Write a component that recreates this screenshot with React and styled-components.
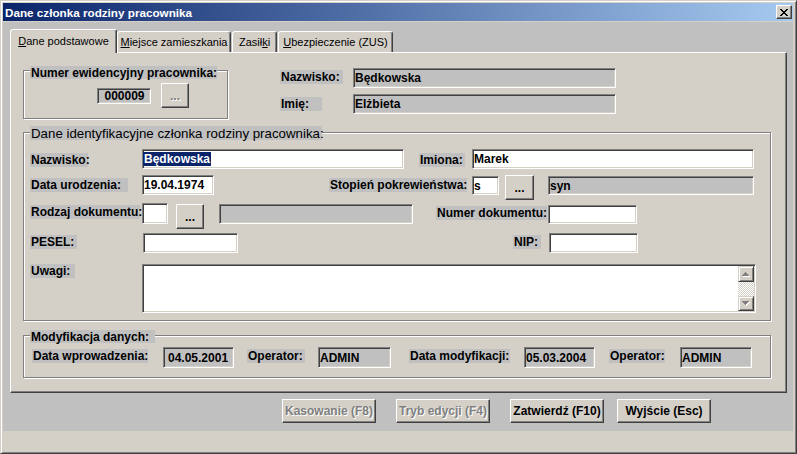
import React from "react";
import styled, { createGlobalStyle } from "styled-components";

const SANS = '"Liberation Sans", Arial, sans-serif';

const GlobalStyle = createGlobalStyle`
  html, body {
    margin: 0;
    padding: 0;
    background: #d4d0c8;
  }
  body {
    font-family: ${SANS};
  }
`;

const Window = styled.div`
  width: 797px;
  height: 454px;
  box-sizing: border-box;
  border: 1px solid;
  border-color: #d4d0c8 #404040 #404040 #d4d0c8;
  box-shadow: inset 1px 1px 0 #fff, inset -1px -1px 0 #808080;
  padding: 2px 3px 1px 2px;
  background: #d4d0c8;
  display: flex;
  flex-direction: column;
`;

const TitleBar = styled.div`
  flex: none;
  height: 18px;
  margin-bottom: 1px;
  padding: 0 1px 0 2px;
  background: linear-gradient(to right, #0a246a, #a6caf0);
  display: flex;
  align-items: center;
  justify-content: space-between;
  color: #fff;
  font: bold 11.7px ${SANS};
  white-space: nowrap;
`;

const CloseButton = styled.div`
  width: 16px;
  height: 14px;
  box-sizing: border-box;
  background: #d4d0c8;
  border: 1px solid;
  border-color: #fff #404040 #404040 #fff;
  box-shadow: inset -1px -1px 0 #808080;
  display: flex;
  align-items: center;
  justify-content: center;
`;

const TabArea = styled.div`
  flex: none;
  background: #c0c0c0;
  padding: 7px 6px 0 7px;
`;

const TabStrip = styled.div`
  display: flex;
  align-items: flex-end;
  height: 23px;
  position: relative;
  z-index: 1;
`;

const Tab = styled.div`
  flex: none;
  box-sizing: border-box;
  width: ${(p) => p.$w}px;
  height: ${(p) => (p.$active ? 24 : 21)}px;
  margin-bottom: ${(p) => (p.$active ? -1 : 0)}px;
  margin-left: ${(p) => p.$ml || 0}px;
  padding-bottom: ${(p) => (p.$active ? 2 : 0)}px;
  background: #d4d0c8;
  border: 1px solid;
  border-bottom: none;
  border-color: #fff #404040 transparent #fff;
  box-shadow: inset -1px 0 0 #808080;
  border-radius: 3px 3px 0 0;
  display: flex;
  align-items: center;
  justify-content: center;
  font: 11px ${SANS};
  color: #000;
  white-space: nowrap;
`;

const Page = styled.div`
  box-sizing: border-box;
  height: 341px;
  background: #d4d0c8;
  border: 1px solid;
  border-color: #fff #404040 #404040 #fff;
  box-shadow: inset -1px -1px 0 #808080;
  padding-left: 12px;
  display: flex;
  flex-direction: column;
`;

const TopSection = styled.div`
  display: flex;
  align-items: flex-start;
  margin-top: 15px;
`;

const InfoColumn = styled.div`
  display: flex;
  flex-direction: column;
  gap: 6px;
  margin-left: 52px;
`;

const Group = styled.div`
  flex: none;
  box-sizing: border-box;
  width: ${(p) => p.$w}px;
  height: ${(p) => p.$h}px;
  margin-top: ${(p) => p.$mt || 0}px;
  border: 1px solid #808080;
  box-shadow: inset 1px 1px 0 #fff, 1px 1px 0 #fff;
  display: flex;
  flex-direction: column;
`;

const Legend = styled.div`
  align-self: flex-start;
  box-sizing: border-box;
  width: ${(p) => p.$w}px;
  height: ${(p) => (p.$regular ? 14 : 13)}px;
  line-height: ${(p) => (p.$regular ? 14 : 13)}px;
  margin: ${(p) => p.$mt}px 0 0 6px;
  padding-left: 1px;
  background: #c0c0c0;
  font: ${(p) => (p.$regular ? "normal 13.3px" : "bold 12px")} ${SANS};
  white-space: nowrap;
`;

const Row = styled.div`
  display: flex;
  align-items: ${(p) => p.$align || "flex-start"};
  margin-top: ${(p) => p.$mt || 0}px;
  padding-left: ${(p) => p.$pl || 0}px;
`;

const LabelCell = styled.div`
  flex: none;
  display: flex;
  width: ${(p) => p.$w}px;
  margin-left: ${(p) => p.$ml || 0}px;
`;

const Label = styled.div`
  flex: none;
  box-sizing: border-box;
  width: ${(p) => p.$w}px;
  height: 14px;
  line-height: 14px;
  margin-top: ${(p) => p.$mt || 0}px;
  padding-left: 1px;
  background: #c0c0c0;
  font: bold 12px ${SANS};
  color: #000;
  white-space: nowrap;
`;

const Field = styled.div`
  flex: none;
  box-sizing: border-box;
  width: ${(p) => p.$w}px;
  height: ${(p) => p.$h || 20}px;
  margin-left: ${(p) => p.$ml || 0}px;
  margin-top: ${(p) => p.$mt || 0}px;
  padding-left: ${(p) => p.$pad || 1}px;
  background: ${(p) => (p.$ro ? "#c0c0c0" : "#fff")};
  border: 1px solid;
  border-color: #808080 #fff #fff #808080;
  box-shadow: inset 1px 1px 0 #404040, inset -1px -1px 0 #d4d0c8;
  display: flex;
  align-items: center;
  justify-content: ${(p) => (p.$center ? "center" : "flex-start")};
  font: bold 12px ${SANS};
  color: #000;
  white-space: nowrap;
  overflow: hidden;
`;

const Selected = styled.span`
  height: 14px;
  line-height: 14px;
  margin-left: -1px;
  padding: 0 1px;
  background: #0a246a;
  color: #fff;
`;

const DotButton = styled.div`
  flex: none;
  box-sizing: border-box;
  width: ${(p) => p.$w || 29}px;
  height: 25px;
  margin-left: ${(p) => p.$ml || 0}px;
  margin-top: ${(p) => p.$mt || 0}px;
  background: #d4d0c8;
  border: 1px solid;
  border-color: #fff #404040 #404040 #fff;
  box-shadow: inset -1px -1px 0 #808080;
  display: flex;
  align-items: center;
  justify-content: center;
  font: bold 12px ${SANS};
  color: ${(p) => (p.$disabled ? "#808080" : "#000")};
  text-shadow: ${(p) => (p.$disabled ? "1px 1px 0 #fff" : "none")};
`;

const Memo = styled(Field)`
  padding: 1px;
  align-items: stretch;
  justify-content: flex-end;
`;

const ScrollBar = styled.div`
  width: 16px;
  display: flex;
  flex-direction: column;
`;

const ScrollButton = styled.div`
  flex: none;
  box-sizing: border-box;
  height: ${(p) => p.$h}px;
  background: #d4d0c8;
  border: 1px solid;
  border-color: #d4d0c8 #404040 #404040 #d4d0c8;
  box-shadow: inset 1px 1px 0 #fff, inset -1px -1px 0 #808080;
  display: flex;
  align-items: center;
  justify-content: center;
`;

const ScrollTrack = styled.div`
  flex: 1;
  background: repeating-conic-gradient(#d4d0c8 0 25%, #fff 0 50%) 0 0 / 2px 2px;
`;

const ButtonBar = styled.div`
  flex: none;
  height: 38px;
  box-sizing: border-box;
  padding: 6px 0 0 279px;
  background: #c0c0c0;
  display: flex;
  align-items: flex-start;
`;

const ActionButton = styled.div`
  flex: none;
  box-sizing: border-box;
  width: 94px;
  height: 24px;
  margin-left: ${(p) => p.$ml || 0}px;
  background: #d4d0c8;
  border: 1px solid;
  border-color: #fff #404040 #404040 #fff;
  box-shadow: inset -1px -1px 0 #808080;
  display: flex;
  align-items: center;
  justify-content: center;
  font: bold 12px ${SANS};
  color: ${(p) => (p.$disabled ? "#808080" : "#000")};
  text-shadow: ${(p) => (p.$disabled ? "1px 1px 0 #fff" : "none")};
  white-space: nowrap;
`;

const BottomStrip = styled.div`
  flex: 1;
  background: #d4d0c8;
`;

const CloseGlyph = () => (
  <svg width="8" height="7" viewBox="0 0 8 7" shapeRendering="crispEdges">
    <path
      fill="#000"
      d="M0 0h2v1h-2z M6 0h2v1h-2z M1 1h2v1h-2z M5 1h2v1h-2z M2 2h4v1h-4z M3 3h2v1h-2z M2 4h4v1h-4z M1 5h2v1h-2z M5 5h2v1h-2z M0 6h2v1h-2z M6 6h2v1h-2z"
    />
  </svg>
);

const ArrowGlyph = ({ down }) => {
  const rows = down
    ? "M0 0h7v1h-7z M1 1h5v1h-5z M2 2h3v1h-3z M3 3h1v1h-1z"
    : "M3 0h1v1h-1z M2 1h3v1h-3z M1 2h5v1h-5z M0 3h7v1h-7z";
  return (
    <svg width="8" height="5" viewBox="0 0 8 5" shapeRendering="crispEdges">
      <path fill="#fff" d={rows} transform="translate(1 1)" />
      <path fill="#808080" d={rows} />
    </svg>
  );
};

export default function App() {
  return (
    <>
      <GlobalStyle />
      <Window>
        <TitleBar>
          <span>Dane członka rodziny pracownika</span>
          <CloseButton>
            <CloseGlyph />
          </CloseButton>
        </TitleBar>

        <TabArea>
          <TabStrip>
            <Tab $w={107} $active>
              <span><u>D</u>ane podstawowe</span>
            </Tab>
            <Tab $w={114}>
              <span><u>M</u>iejsce zamieszkania</span>
            </Tab>
            <Tab $w={45} $ml={1}>
              <span>Zasił<u>k</u>i</span>
            </Tab>
            <Tab $w={115} $ml={1}>
              <span><u>U</u>bezpieczenie (ZUS)</span>
            </Tab>
          </TabStrip>

          <Page>
            <TopSection>
              <Group $w={205} $h={49} $mt={2}>
                <Legend $w={187} $mt={-5}>Numer ewidencyjny pracownika:</Legend>
                <Row $mt={4} $pl={73} $align="center">
                  <Field $w={54} $h={16} $ro $center>000009</Field>
                  <DotButton $w={28} $ml={10} $disabled>...</DotButton>
                </Row>
              </Group>

              <InfoColumn>
                <Row>
                  <LabelCell $w={73}><Label $w={63} $mt={2}>Nazwisko:</Label></LabelCell>
                  <Field $w={263} $ro>Będkowska</Field>
                </Row>
                <Row>
                  <LabelCell $w={73}><Label $w={42} $mt={3}>Imię:</Label></LabelCell>
                  <Field $w={263} $ro>Elżbieta</Field>
                </Row>
              </InfoColumn>
            </TopSection>

            <Group $w={748} $h={189} $mt={13}>
              <Legend $w={292} $mt={-7} $regular>
                Dane identyfikacyjne członka rodziny pracownika:
              </Legend>

              <Row $mt={9} $pl={6}>
                <LabelCell $w={112}><Label $w={58} $mt={4}>Nazwisko:</Label></LabelCell>
                <Field $w={262}><Selected>Będkowska</Selected></Field>
                <LabelCell $w={53} $ml={15}><Label $w={46} $mt={4}>Imiona:</Label></LabelCell>
                <Field $w={282}>Marek</Field>
              </Row>

              <Row $mt={6} $pl={6}>
                <LabelCell $w={112}><Label $w={98} $mt={3}>Data urodzenia:</Label></LabelCell>
                <Field $w={72}>19.04.1974</Field>
                <LabelCell $w={143} $ml={115}><Label $w={138} $mt={3}>Stopień pokrewieństwa:</Label></LabelCell>
                <Field $w={27} $mt={1} $h={19}>s</Field>
                <DotButton $ml={6}>...</DotButton>
                <Field $w={206} $ml={14} $mt={1} $h={19} $ro>syn</Field>
              </Row>

              <Row $mt={3} $pl={6}>
                <LabelCell $w={112}><Label $w={110} $mt={2}>Rodzaj dokumentu:</Label></LabelCell>
                <Field $w={26} $h={21}></Field>
                <DotButton $w={28} $ml={8} $mt={1}>...</DotButton>
                <Field $w={194} $ml={15} $mt={1} $ro></Field>
                <LabelCell $w={112} $ml={23}><Label $w={111} $mt={3}>Numer dokumentu:</Label></LabelCell>
                <Field $w={89} $mt={2} $h={19}></Field>
              </Row>

              <Row $mt={4} $pl={6}>
                <LabelCell $w={113}><Label $w={47} $mt={2}>PESEL:</Label></LabelCell>
                <Field $w={95}></Field>
                <LabelCell $w={36} $ml={275}><Label $w={28} $mt={2}>NIP:</Label></LabelCell>
                <Field $w={89}></Field>
              </Row>

              <Row $mt={11} $pl={6}>
                <LabelCell $w={112}><Label $w={45}>Uwagi:</Label></LabelCell>
                <Memo $w={614} $h={49}>
                  <ScrollBar>
                    <ScrollButton $h={16}><ArrowGlyph /></ScrollButton>
                    <ScrollTrack />
                    <ScrollButton $h={15}><ArrowGlyph down /></ScrollButton>
                  </ScrollBar>
                </Memo>
              </Row>
            </Group>

            <Group $w={748} $h={43} $mt={14}>
              <Legend $w={125} $mt={-6}>Modyfikacja danych:</Legend>
              <Row $mt={4} $pl={8}>
                <LabelCell $w={131}><Label $w={116} $mt={2}>Data wprowadzenia:</Label></LabelCell>
                <Field $w={71} $h={21} $ro $pad={4}>04.05.2001</Field>
                <LabelCell $w={71} $ml={13}><Label $w={58} $mt={2}>Operator:</Label></LabelCell>
                <Field $w={73} $h={21} $ro>ADMIN</Field>
                <LabelCell $w={115} $ml={18}><Label $w={101} $mt={2}>Data modyfikacji:</Label></LabelCell>
                <Field $w={71} $h={21} $ro>05.03.2004</Field>
                <LabelCell $w={71} $ml={14}><Label $w={56} $mt={2}>Operator:</Label></LabelCell>
                <Field $w={72} $h={21} $ro>ADMIN</Field>
              </Row>
            </Group>
          </Page>
        </TabArea>

        <ButtonBar>
          <ActionButton $disabled>Kasowanie (F8)</ActionButton>
          <ActionButton $ml={20} $disabled>Tryb edycji (F4)</ActionButton>
          <ActionButton $ml={20}>Zatwierdź (F10)</ActionButton>
          <ActionButton $ml={13}>Wyjście (Esc)</ActionButton>
        </ButtonBar>

        <BottomStrip />
      </Window>
    </>
  );
}
